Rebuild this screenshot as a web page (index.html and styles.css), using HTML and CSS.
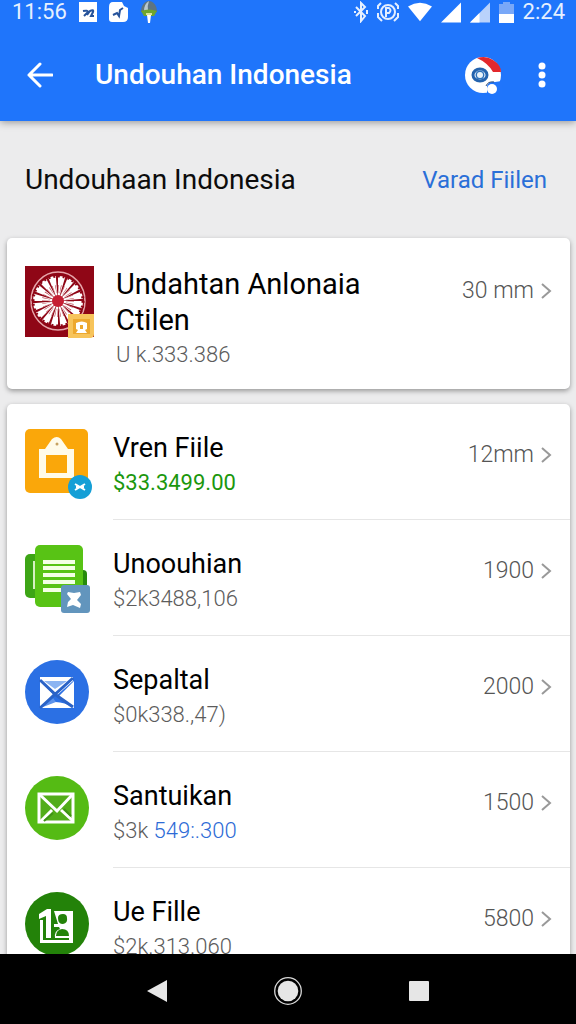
FILE: index.html
```html
<!DOCTYPE html>
<html lang="id">
<head>
<meta charset="utf-8">
<meta name="viewport" content="width=device-width, initial-scale=1">
<title>Undouhan Indonesia</title>
<link rel="stylesheet" href="styles.css">
</head>
<body>
<header class="top">
  <div class="status">
    <div class="status-group">
      <span class="clock">11:56</span>
      <svg width="18" height="20" viewBox="0 0 18 20"><path fill="#fff" d="M0 0h18v20H0z"/><path d="M4 9q5-1 5 1l-4 4M8 13l3-4q4-2 3 1l-2 4h3" fill="none" stroke="#26539b" stroke-width="2"/></svg>
      <svg width="20" height="20" viewBox="0 0 20 20"><path fill="#fff" d="M4 0h9l2 4 4 2v9q0 5-5 5H3q-3 0-3-3V5q0-5 4-5z"/><path d="M4 13l4-2 2 3 1-6 3-2" fill="none" stroke="#26539b" stroke-width="2"/></svg>
      <svg width="16" height="22" viewBox="0 0 16 22"><path fill="#5e7480" d="M0 11C0 4 4 0 8 0s8 4 8 11z"/><path fill="#b9c8cf" d="M3 10Q3 3 8 0q-2 5-1 10z"/><path fill="#6fa52e" d="M0 10q8-3 16 0l-3 5H3z"/><path fill="#fff" d="M6 14h4l-1 8H7z"/><path fill="#dbe59a" d="M5 12h6v2H5z"/></svg>
    </div>
    <div class="status-group status-right">
      <svg width="14" height="22" viewBox="0 0 14 22"><path d="M2 6l9 9-4 5V2l4 4-9 9M1 10v2M13 9v4" fill="none" stroke="#e8f1ff" stroke-width="2"/></svg>
      <svg width="22" height="20" viewBox="0 0 22 20" fill="none" stroke="#e3eeff" stroke-width="2"><circle cx="11" cy="10" r="7"/><path d="M9 15V6h3q3 2 0 5H9M4 1L1 4v3M18 1l3 3v3M1 11v4l4 4M21 11v4l-4 4"/></svg>
      <svg width="24" height="20" viewBox="0 0 26 20"><path fill="#fff" d="M0 4Q13-4 26 4L13 20z"/></svg>
      <svg width="20" height="21" viewBox="0 0 21 21"><path fill="#fff" d="M21 0v21H0z"/></svg>
      <svg width="20" height="21" viewBox="0 0 21 21"><path fill="#b9d2fb" d="M21 0v21H0z"/><path fill="#fff" d="M10 11v10H0z"/></svg>
      <svg width="15" height="21" viewBox="0 0 15 21"><path fill="#79a8f8" d="M0 2h4V0h7v2h4v11H0z"/><path fill="#fff" d="M0 12h15v9H0z"/></svg>
      <span class="clock">2:24</span>
    </div>
  </div>
  <div class="appbar">
    <button class="icon-btn" type="button" aria-label="Kembali"><svg width="26" height="26" viewBox="0 0 26 26"><path d="M13 2L2 13l11 11M2 13h23" fill="none" stroke="#fff" stroke-width="3" stroke-linecap="round" stroke-linejoin="round"/></svg></button>
    <h1 class="title">Undouhan Indonesia</h1>
    <button class="icon-btn" type="button" aria-label="Akun"><svg width="38" height="38" viewBox="0 0 38 38"><circle cx="19" cy="19" r="18" fill="#fff"/><path d="M13 2Q22-1 29 4q8 5 8 12h-8Q24 7 13 2z" fill="#e2282d"/><ellipse cx="16" cy="19" rx="7" ry="6" fill="#fff" stroke="#2463ae" stroke-width="3"/><circle cx="16" cy="19" r="4.5" fill="#2f73bd"/><circle cx="16" cy="19" r="3" fill="#e9f3fb"/><path d="M23 38v-8q2-5 8-4l7-1v13z" fill="#2075fb"/><circle cx="28" cy="33" r="5" fill="#fff"/><path d="M22 30q2-5 8-4" fill="none" stroke="#334f76" stroke-width="1"/></svg></button>
    <button class="icon-btn" type="button" aria-label="Menu"><svg width="8" height="26" viewBox="0 0 8 26" fill="#fff"><circle cx="4" cy="4" r="3.5"/><circle cx="4" cy="13" r="3.5"/><circle cx="4" cy="22" r="3.5"/></svg></button>
  </div>
</header>

<main class="content">
  <div class="section-head">
    <h2 class="section-title">Undouhaan Indonesia</h2>
    <a class="section-link" href="#">Varad Fiilen</a>
  </div>

  <a class="card row row-lead" href="#">
    <svg class="row-icon" width="70" height="72" viewBox="0 0 70 72"><path fill="#8f0616" d="M0 0h69v71H0z"/><ellipse cx="33" cy="35" rx="27" ry="29" fill="none" stroke="#e6a5aa" stroke-width="1.5"/><circle cx="33" cy="35" r="15" fill="none" stroke="#fff" stroke-width="20" pathLength="160" stroke-dasharray="7.6 2.4"/><circle cx="33" cy="35" r="25" fill="none" stroke="#8f0616" stroke-width="3" pathLength="160" stroke-dasharray="2 3"/><circle cx="33" cy="35" r="12" fill="none" stroke="#b33440" stroke-width="8" pathLength="160" stroke-dasharray="1 4"/><circle cx="33" cy="35" r="6" fill="#c51f33"/><path fill="#f7c45b" d="M43 48h26v20q0 4-4 4H43z"/><path fill="#eda82f" d="M48 53h17v15H48z"/><path fill="#fff" fill-rule="evenodd" d="M51 57q6-3 11 0v6l-2 1 2 3H51l2-3-2-1zM55 59v4h3v-4z"/></svg>
    <span class="row-text"><span class="name">Undahtan Anlonaia Ctilen</span><span class="sub">U k.333.386</span></span>
    <span class="meta">30 mm<svg class="chev" width="12" height="16" viewBox="0 0 12 16"><path d="M2 1l8 7-8 7"/></svg></span>
  </a>

  <div class="card">
    <a class="row" href="#">
      <svg class="row-icon" width="68" height="72" viewBox="0 0 68 72"><rect y="1" width="63" height="64" rx="5" fill="#faa70a"/><path fill="#fffbe9" fill-rule="evenodd" d="M14 21h6l7-10q5-4 9 0l7 10h6v29H14zM21 27v18h21V27z"/><circle cx="32" cy="16" r="1.5" fill="#c6a262"/><circle cx="55" cy="59" r="12" fill="#159fd6"/><path d="M50 56l10 6M60 56l-10 6M51 59h8" stroke="#fff" stroke-width="2"/></svg>
      <span class="row-body"><span class="row-text"><span class="name">Vren Fiile</span><span class="sub sub-green">$33.3499.00</span></span><span class="meta">12mm<svg class="chev" width="12" height="16" viewBox="0 0 12 16"><path d="M2 1l8 7-8 7"/></svg></span></span>
    </a>
    <a class="row" href="#">
      <svg class="row-icon" width="68" height="72" viewBox="0 0 68 72"><rect y="10" width="24" height="44" rx="5" fill="#3da516"/><path d="M9 17v28" stroke="#d6f0c1" stroke-width="2"/><rect x="48" y="26" width="14" height="28" rx="4" fill="#278a0c"/><rect x="10" y="1" width="48" height="62" rx="5" fill="#58c315"/><path d="M18 18h32M18 24h32M18 31h32M18 38h32M18 46h20" stroke="#f3ffe5" stroke-width="4"/><rect x="36" y="41" width="29" height="28" rx="3" fill="#6295bd"/><path d="M43 48l6 1 6-1 1 3-4 5 4 4-1 4-7-3-6 2 1-5 3-3-4-5z" fill="#fff"/></svg>
      <span class="row-body"><span class="row-text"><span class="name">Unoouhian</span><span class="sub">$2k3488,106</span></span><span class="meta">1900<svg class="chev" width="12" height="16" viewBox="0 0 12 16"><path d="M2 1l8 7-8 7"/></svg></span></span>
    </a>
    <a class="row" href="#">
      <svg class="row-icon" width="68" height="72" viewBox="0 0 68 72"><circle cx="32" cy="32" r="32" fill="#2b70e4"/><path fill="#fff" d="M15 17h33v4l-17 15L15 21zM15 21l13 13-13 14zM49 21v27L34 36zM15 48l13-6q10-1 21 6z"/><path fill="#8cb4f2" d="M19 21h23l-12 8z"/><path fill="#5c92eb" d="M18 47l10-9 3 4z"/><path d="M48 18L15 48M15 20l16 15 17 12" stroke="#2b63c7" stroke-width="3" fill="none"/></svg>
      <span class="row-body"><span class="row-text"><span class="name">Sepaltal</span><span class="sub">$0k338.,47)</span></span><span class="meta">2000<svg class="chev" width="12" height="16" viewBox="0 0 12 16"><path d="M2 1l8 7-8 7"/></svg></span></span>
    </a>
    <a class="row" href="#">
      <svg class="row-icon" width="68" height="72" viewBox="0 0 68 72"><circle cx="32" cy="32" r="32" fill="#55bb14"/><path d="M14 18h34v28H14z" fill="#52ad19" stroke="#fff" stroke-width="3"/><path d="M14 18l18 17 16-17M15 46l12-12M48 45L36 34" fill="none" stroke="#fff" stroke-width="3"/><path d="M19 45l9-8M46 40l-7-7" stroke="#3f9215" stroke-width="2"/></svg>
      <span class="row-body"><span class="row-text"><span class="name">Santuikan</span><span class="sub">$3k<span class="sub-blue"> 549:.300</span></span></span><span class="meta">1500<svg class="chev" width="12" height="16" viewBox="0 0 12 16"><path d="M2 1l8 7-8 7"/></svg></span></span>
    </a>
    <a class="row" href="#">
      <svg class="row-icon" width="68" height="72" viewBox="0 0 68 72"><circle cx="32" cy="32" r="32" fill="#238209"/><path d="M14 22l8-5h4v29h-5V24l-7 3zM15 28h3v20h30v3H15z" fill="#fff"/><path fill="#fff" fill-rule="evenodd" d="M29 19h19v32h-4v-5H30q-1-7 5-9l-1-2h-5v-3h4zM33 26q0 6 5 6 5-1 4-6 0-4-4-4-5 0-5 4zM37 37q-6 1-6 7h13q0-7-7-7z"/></svg>
      <span class="row-body"><span class="row-text"><span class="name">Ue Fille</span><span class="sub">$2k.313.060</span></span><span class="meta">5800<svg class="chev" width="12" height="16" viewBox="0 0 12 16"><path d="M2 1l8 7-8 7"/></svg></span></span>
    </a>
  </div>
</main>

<nav class="navbar">
  <button class="nav-btn" type="button" aria-label="Back"><svg width="22" height="24" viewBox="0 0 22 24"><path d="M1 12L21 1v22z" fill="#e6e6e6"/></svg></button>
  <button class="nav-btn" type="button" aria-label="Home"><svg width="30" height="30" viewBox="0 0 30 30"><circle cx="15" cy="15" r="13.3" fill="none" stroke="#d8d8d8" stroke-width="1.3"/><circle cx="15" cy="15" r="10.3" fill="#e6e6e6"/></svg></button>
  <button class="nav-btn" type="button" aria-label="Recent"><svg width="22" height="22" viewBox="0 0 22 22"><rect x="1" y="1" width="20" height="20" rx="1" fill="#e6e6e6"/></svg></button>
</nav>
</body>
</html>
```
FILE: styles.css
```css
* { box-sizing: border-box; }

body {
  margin: 0;
  height: 100vh;
  display: flex;
  flex-direction: column;
  overflow: hidden;
  background: #ececed;
  color: #0c0c0c;
  font-family: Roboto, "Liberation Sans", sans-serif;
}

a { color: inherit; text-decoration: none; }
svg { display: block; flex: none; }

button {
  display: flex;
  align-items: center;
  justify-content: center;
  padding: 0;
  border: 0;
  background: none;
}

.top {
  flex: none;
  background: #1f75fb;
  color: #fff;
  box-shadow: 0 1px 8px rgba(0, 0, 0, .4);
  z-index: 1;
}

.status {
  display: flex;
  justify-content: space-between;
  height: 24px;
  padding: 0 11px 0 12px;
}

.status-group { display: flex; align-items: center; gap: 12px; }
.status-right { gap: 9px; }
.clock { font-size: 22px; line-height: 24px; color: #e6f0ff; }

.appbar {
  display: flex;
  align-items: center;
  height: 97px;
  padding: 4px 30px 0 27px;
}

.title {
  flex: 1;
  margin: 0 0 0 42px;
  font-size: 28px;
  line-height: 36px;
  font-weight: 500;
}

.icon-btn + .icon-btn { margin-left: 36px; }

.content { flex: 1; min-height: 0; overflow: hidden; padding: 0 6px 0 7px; }

.section-head {
  display: flex;
  align-items: center;
  justify-content: space-between;
  height: 117px;
  padding: 0 23px 0 18px;
}

.section-title { margin: 0; font-size: 28px; line-height: 36px; font-weight: 400; }
.section-link { font-size: 24px; line-height: 36px; color: #2a6fd8; }

.card {
  background: #fff;
  border-radius: 5px;
  box-shadow: 0 2px 5px rgba(0, 0, 0, .36);
  margin-bottom: 15px;
}

.row { display: flex; align-items: flex-start; gap: 20px; padding-left: 18px; }
.row-icon { margin-top: 24px; }
.row-body {
  flex: 1;
  display: flex;
  align-items: flex-start;
  height: 116px;
  padding: 26px 18px 0 0;
  border-bottom: 1px solid #e6e6e6;
}
.row:last-child .row-body { border-bottom: 0; }
.row-text { flex: 1; display: flex; flex-direction: column; }
.name { font-size: 27px; line-height: 36px; color: #000; }
.sub { font-size: 22px; line-height: 34px; color: #5c5c5c; font-weight: 300; }
.sub-green { color: #1b970d; font-weight: 400; }
.sub-blue { color: #2d6bd6; }

.meta {
  display: flex;
  align-items: center;
  gap: 6px;
  margin-top: 7px;
  font-size: 23px;
  line-height: 36px;
  font-weight: 300;
  color: #555;
}

.chev { fill: none; stroke: #999; stroke-width: 2; }

.row-lead { gap: 21px; padding: 28px 18px 17px 18px; }
.row-lead .row-icon { margin-top: 0; }
.row-lead .row-text { padding-right: 60px; }
.row-lead .name { font-size: 29px; }

.navbar {
  flex: none;
  display: flex;
  align-items: center;
  justify-content: center;
  height: 70px;
  padding-top: 4px;
  background: #000;
}

.nav-btn { width: 131px; height: 48px; }
```
